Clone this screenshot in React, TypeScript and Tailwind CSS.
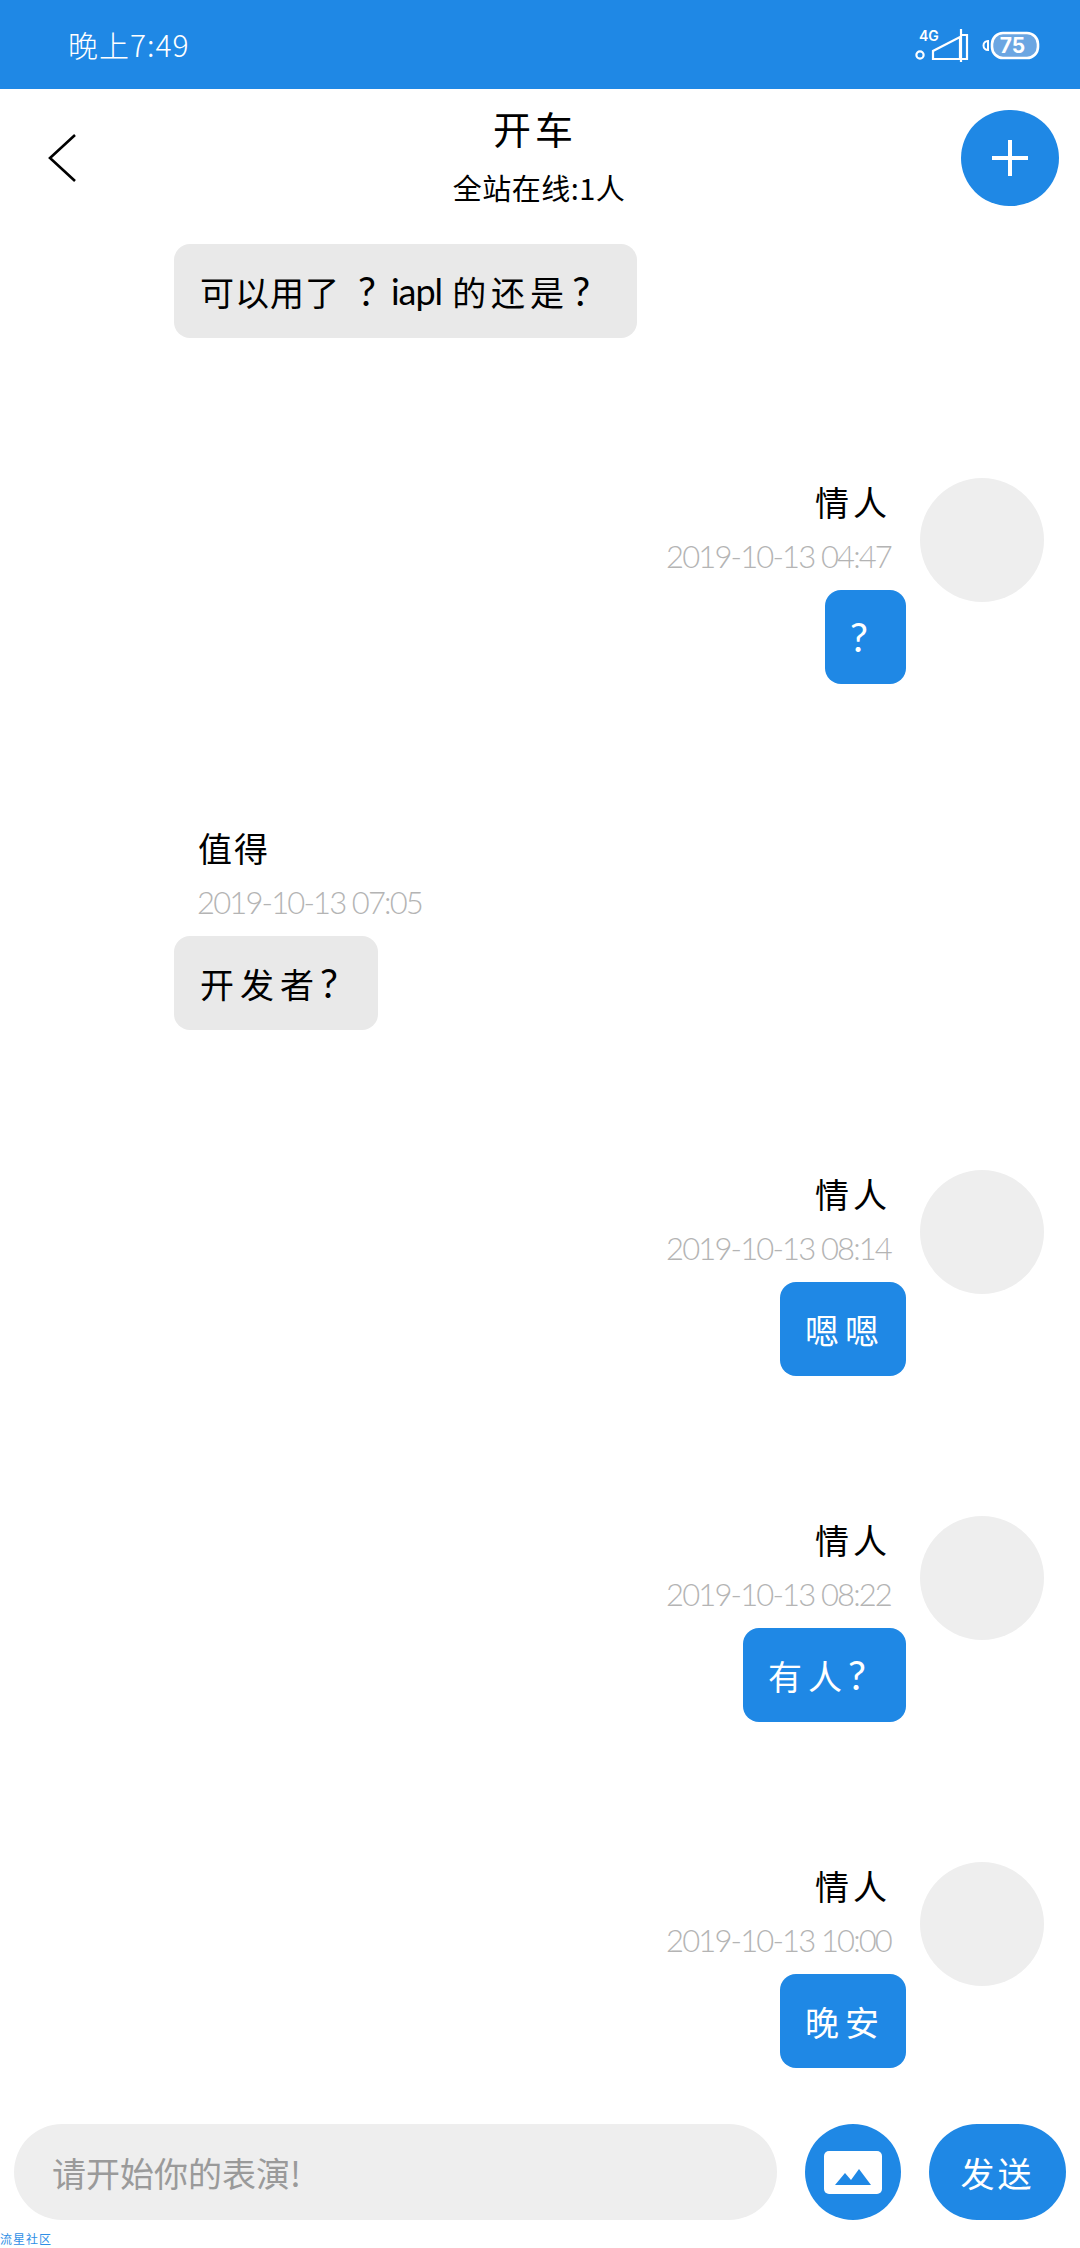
import React from 'react';

const CJK = "font-['Noto_Sans_CJK_SC','Noto_Sans',sans-serif]";

type Msg = { name: string; time: string; text: React.ReactNode; width: string };

// the question mark in the shot is a lot wider than the CJK one
const Q = () => <span className="font-['Lato',sans-serif] text-[40px] font-normal leading-none">?</span>;

const mine: Msg[] = [
  { name: '情人', time: '2019-10-13 04:47', text: <Q />, width: 'w-[81px]' },
  { name: '情人', time: '2019-10-13 08:14', text: '嗯嗯', width: 'w-[126px]' },
  { name: '情人', time: '2019-10-13 08:22', text: <>有人<Q /></>, width: 'w-[163px]' },
  { name: '情人', time: '2019-10-13 10:00', text: '晚安', width: 'w-[126px]' },
];

const MineRow: React.FC<{ msg: Msg; className?: string }> = ({ msg, className }) => (
  <div className={`flex justify-end pr-[36px] ${className ?? ''}`}>
    <div className="flex flex-col items-end">
      <div className="h-[48px] pr-[15px] text-[34px] leading-[48px] tracking-[4px] text-black">{msg.name}</div>
      <div className="mt-[4px] h-[52px] pr-[15px] font-['Lato',sans-serif] text-[31px] font-light leading-[52px] tracking-[-1.85px] text-[#b4b4b4]">{msg.time}</div>
      <div className={`mt-[8px] flex h-[94px] items-center rounded-[16px] bg-[#1f88e5] pl-[25px] text-[34px] tracking-[6px] text-white ${msg.width}`}>
        {msg.text}
      </div>
    </div>
    <div className="ml-[14px] h-[124px] w-[124px] rounded-full bg-[#eeeeee]" />
  </div>
);

export default function App() {
  return (
    <div className={`flex h-[2248px] w-[1080px] flex-col overflow-hidden bg-white ${CJK}`}>
      {/* Status bar */}
      <div className="flex h-[89px] shrink-0 items-center justify-between bg-[#1f88e5] pl-[68px] pr-[40px] text-white">
        <span className="text-[30px] font-light tracking-[1px]">晚上7:49</span>
        <div className="flex items-center">
          <svg width="56" height="36" viewBox="0 0 56 36" fill="none" stroke="white" strokeWidth="2.2">
            <text x="4" y="14" fill="white" stroke="none" fontSize="14" fontWeight="600" fontFamily="Inter, sans-serif">4G</text>
            <circle cx="5" cy="28" r="3.6" />
            <path d="M18 32 V24 L45 10 V32 Z" />
            <path d="M46 2 V35 M46 8 H52 V32 H46" />
          </svg>
          <svg className="ml-[9px]" width="60" height="32" viewBox="0 0 60 32">
            <path d="M8 12 A4 4 0 0 0 8 21 Z" fill="none" stroke="white" strokeWidth="2" />
            <rect x="12" y="4" width="46" height="25" rx="11" fill="#6ba6e2" stroke="white" strokeWidth="2.6" />
            <text x="32.5" y="24" textAnchor="middle" fill="white" fontSize="21" fontWeight="700" fontFamily="Inter, sans-serif">75</text>
          </svg>
        </div>
      </div>

      {/* Header */}
      <div className="relative flex h-[117px] shrink-0 flex-col items-center">
        <svg className="absolute left-[46px] top-[44px]" width="34" height="50" viewBox="0 0 34 50" fill="none" stroke="black" strokeWidth="2.6">
          <path d="M29 2 L4 25 L29 48" />
        </svg>
        <div className="mr-[10px] mt-[17px] h-[44px] text-[38px] leading-[44px] tracking-[4px] text-black">开车</div>
        <div className="mr-[2px] mt-[19px] text-[29px] leading-[36px] tracking-[0.5px] text-black">全站在线:1人</div>
        <div className="absolute left-[961px] top-[21px] flex h-[96px] w-[98px] items-center justify-center rounded-full bg-[#1f88e5]">
          <svg width="36" height="36" viewBox="0 0 36 36" stroke="white" strokeWidth="4">
            <path d="M18 0 V36 M0 18 H36" />
          </svg>
        </div>
      </div>

      {/* Messages */}
      <div className="flex flex-1 flex-col">
        <div className="ml-[174px] mt-[38px] flex h-[94px] w-[463px] items-center rounded-[16px] bg-[#e9e9e9] pl-[26px] text-[34px] tracking-[1px] text-black">
          可以用了<span className="ml-[18px]"><Q /></span><span className="ml-[14px] font-['Lato',sans-serif] text-[36px] tracking-[-1px]">iapl</span><span className="ml-[10px] tracking-[5px]">的还是</span><span className="ml-[3px]"><Q /></span>
        </div>

        <MineRow msg={mine[0]} className="mt-[140px]" />

        <div className="ml-[174px] mt-[140px] flex flex-col items-start">
          <div className="h-[48px] pl-[24px] text-[34px] leading-[48px] tracking-[2px] text-black">值得</div>
          <div className="mt-[4px] h-[52px] pl-[23px] font-['Lato',sans-serif] text-[31px] font-light leading-[52px] tracking-[-1.85px] text-[#b4b4b4]">2019-10-13 07:05</div>
          <div className="mt-[8px] flex h-[94px] w-[204px] items-center rounded-[16px] bg-[#e9e9e9] pl-[26px] text-[34px] tracking-[6px] text-black">
            开发者<Q />
          </div>
        </div>

        <MineRow msg={mine[1]} className="mt-[140px]" />
        <MineRow msg={mine[2]} className="mt-[140px]" />
        <MineRow msg={mine[3]} className="mt-[140px]" />
      </div>

      {/* Input bar */}
      <div className="flex h-[96px] shrink-0 items-center pl-[14px]">
        <div className="flex h-[96px] w-[763px] items-center rounded-full bg-[#eeeeee] pl-[38px] text-[34px] text-[#9a9a9a]">
          请开始你的表演!
        </div>
        <div className="ml-[28px] flex h-[96px] w-[96px] items-center justify-center rounded-full bg-[#1f88e5]">
          <svg width="58" height="43" viewBox="0 0 58 43">
            <rect x="0" y="0" width="58" height="43" rx="5" fill="white" />
            <path d="M11 34 L21 22 L27 29 L35 18 L47 34 Z" fill="#1f88e5" />
          </svg>
        </div>
        <div className="ml-[28px] flex h-[96px] w-[137px] items-center justify-center rounded-full bg-[#1f88e5] text-[34px] tracking-[3px] text-white">
          发送
        </div>
      </div>
      <div className="mt-[10px] h-[18px] shrink-0 text-[12px] leading-[18px] tracking-[1px] text-[#2f8fe6]">流星社区</div>
    </div>
  );
}
